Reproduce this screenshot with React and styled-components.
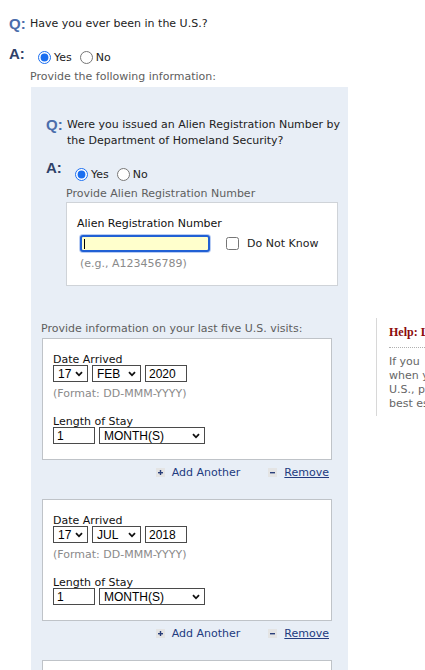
import styled, { createGlobalStyle } from 'styled-components';

const GlobalStyle = createGlobalStyle`
  html, body {
    margin: 0;
    padding: 0;
    background: #fff;
    overflow: hidden;
  }
  body {
    font-family: "DejaVu Sans", Verdana, sans-serif;
    font-size: 11px;
    color: #222;
  }
`;

const visits = [
  { day: '17', month: 'FEB', year: '2020', length: '1', unit: 'MONTH(S)' },
  { day: '17', month: 'JUL', year: '2018', length: '1', unit: 'MONTH(S)' },
];

function Chevron() {
  return (
    <svg width="8" height="6" viewBox="0 0 8 6">
      <path d="M1 1.2 L4 4.3 L7 1.2" fill="none" stroke="#111" strokeWidth="1.8" />
    </svg>
  );
}

function FakeSelect({ value, width }) {
  return (
    <SelectBox $width={width}>
      <span>{value}</span>
      <ChevronSlot>
        <Chevron />
      </ChevronSlot>
    </SelectBox>
  );
}

function SmallIcon({ minus }) {
  return (
    <svg width="9" height="9" viewBox="0 0 9 9">
      <rect x="0" y="0" width="9" height="9" fill="#e4e4e4" />
      <rect x="2" y="4" width="5" height="1.4" fill="#2a3f7a" />
      {!minus && <rect x="3.8" y="2" width="1.4" height="5" fill="#2a3f7a" />}
    </svg>
  );
}

function VisitCard({ visit }) {
  return (
    <>
      <VisitBox>
        <FieldLabel>Date Arrived</FieldLabel>
        <InlineRow>
          <FakeSelect value={visit.day} width={35} />
          <FakeSelect value={visit.month} width={49} />
          <PlainInput $width={42}>{visit.year}</PlainInput>
        </InlineRow>
        <Hint>(Format: DD-MMM-YYYY)</Hint>
        <FieldLabel $spaced>Length of Stay</FieldLabel>
        <InlineRow>
          <PlainInput $width={42}>{visit.length}</PlainInput>
          <FakeSelect value={visit.unit} width={106} />
        </InlineRow>
      </VisitBox>
      <ActionRow>
        <ActionLink>
          <SmallIcon />
          Add Another
        </ActionLink>
        <ActionLink $underline>
          <SmallIcon minus />
          Remove
        </ActionLink>
      </ActionRow>
    </>
  );
}

export default function App() {
  return (
    <Page>
      <GlobalStyle />
      <QRow>
        <QMark>Q:</QMark>
        <QText>Have you ever been in the U.S.?</QText>
      </QRow>
      <ARow>
        <AMark>A:</AMark>
        <RadioGroup>
          <RadioLabel>
            <input type="radio" name="been" defaultChecked />
            Yes
          </RadioLabel>
          <RadioLabel>
            <input type="radio" name="been" />
            No
          </RadioLabel>
        </RadioGroup>
      </ARow>
      <Note $indent={21}>Provide the following information:</Note>

      <Columns>
        <Panel>
          <QRow $inner>
            <QMark>Q:</QMark>
            <QText>
              Were you issued an Alien Registration Number by the Department of
              Homeland Security?
            </QText>
          </QRow>
          <ARow $inner>
            <AMark>A:</AMark>
            <RadioGroup $inner>
              <RadioLabel>
                <input type="radio" name="alien" defaultChecked />
                Yes
              </RadioLabel>
              <RadioLabel>
                <input type="radio" name="alien" />
                No
              </RadioLabel>
            </RadioGroup>
          </ARow>
          <Note $indent={35}>Provide Alien Registration Number</Note>
          <AlienBox>
            <FieldLabel>Alien Registration Number</FieldLabel>
            <AlienRow>
              <YellowInput />
              <CheckLabel>
                <input type="checkbox" />
                Do Not Know
              </CheckLabel>
            </AlienRow>
            <Hint $indent={3}>(e.g., A123456789)</Hint>
          </AlienBox>

          <VisitsHeading>Provide information on your last five U.S. visits:</VisitsHeading>
          {visits.map((v, i) => (
            <VisitCard key={i} visit={v} />
          ))}
          <VisitBox $empty />
        </Panel>

        <HelpColumn>
          <HelpTitle>Help: Length of Stay</HelpTitle>
          <HelpText>
            If you&nbsp;&nbsp;&nbsp;do not know the exact dates
            <br />
            when you arrived or departed the
            <br />
            U.S., please provide your
            <br />
            best estimate.
          </HelpText>
        </HelpColumn>
      </Columns>
    </Page>
  );
}

const Page = styled.div`
  padding: 17px 0 0 9px;
  width: 640px;
`;

const QRow = styled.div`
  display: flex;
  align-items: flex-start;
  margin-left: ${(p) => (p.$inner ? '15px' : '0')};
  margin-top: ${(p) => (p.$inner ? '31px' : '0')};
  padding-right: ${(p) => (p.$inner ? '6px' : '0')};
`;

const QMark = styled.span`
  width: 21px;
  flex-shrink: 0;
  font-family: "Liberation Sans", Arial, sans-serif;
  font-weight: bold;
  font-size: 15px;
  line-height: 14px;
  color: #4b6dab;
`;

const QText = styled.span`
  font-size: 11px;
  line-height: 16px;
  margin-top: -1px;
  color: #222;
`;

const ARow = styled.div`
  display: flex;
  align-items: flex-start;
  margin-left: ${(p) => (p.$inner ? '15px' : '0')};
  margin-top: ${(p) => (p.$inner ? '10px' : '13px')};
`;

const AMark = styled.span`
  width: 29px;
  flex-shrink: 0;
  margin-top: 2px;
  font-family: "Liberation Sans", Arial, sans-serif;
  font-weight: bold;
  font-size: 15px;
  line-height: 14px;
  color: #2f4168;
`;

const RadioGroup = styled.div`
  display: flex;
  gap: 8px;
  margin-top: ${(p) => (p.$inner ? '9px' : '6px')};
`;

const RadioLabel = styled.label`
  display: flex;
  align-items: center;
  font-size: 11px;
  color: #222;

  input {
    margin: 0 3px 0 0;
    width: 13px;
    height: 13px;
    accent-color: #1a6ef0;
  }
`;

const Note = styled.div`
  margin-left: ${(p) => p.$indent}px;
  margin-top: 6px;
  font-size: 11px;
  line-height: 14px;
  color: #5e5e5e;
`;

const Columns = styled.div`
  display: flex;
  align-items: flex-start;
  margin-top: 3px;
`;

const Panel = styled.div`
  width: 317px;
  margin-left: 22px;
  flex-shrink: 0;
  background: #e8eef6;
  padding-bottom: 40px;
`;

const AlienBox = styled.div`
  margin: 1px 10px 0 35px;
  padding: 15px 10px 15px 10px;
  background: #fff;
  border: 1px solid #cfd3d8;
`;

const FieldLabel = styled.div`
  font-size: 11px;
  line-height: 11px;
  color: #111;
  margin-top: ${(p) => (p.$spaced ? '16px' : '0')};
`;

const AlienRow = styled.div`
  display: flex;
  align-items: center;
  margin: 6px 0 0 3px;
`;

const YellowInput = styled.div`
  width: 126px;
  height: 13px;
  background: #ffffcc;
  border: 2px solid #2160d4;
  border-radius: 3px;
  box-shadow: 0 0 0 1px #b9cdf3;
  position: relative;

  &::before {
    content: '';
    position: absolute;
    left: 2px;
    top: 2px;
    width: 1px;
    height: 10px;
    background: #000;
  }
`;

const CheckLabel = styled.label`
  display: flex;
  align-items: center;
  margin-left: 16px;
  font-size: 11px;
  color: #222;

  input {
    margin: 0 8px 0 0;
    width: 13px;
    height: 13px;
  }
`;

const Hint = styled.div`
  margin: 5px 0 0 ${(p) => p.$indent || 0}px;
  font-size: 11px;
  line-height: 13px;
  color: #8a8a8a;
`;

const VisitsHeading = styled.div`
  margin: 36px 0 0 10px;
  font-size: 11px;
  line-height: 14px;
  color: #5e5e5e;
`;

const VisitBox = styled.div`
  width: 268px;
  min-height: ${(p) => (p.$empty ? '98px' : '0')};
  margin: 2px 0 0 11px;
  padding: 15px 10px 15px 10px;
  background: #fff;
  border: 1px solid #bfc3c8;
`;

const InlineRow = styled.div`
  display: flex;
  gap: 4px;
`;

const SelectBox = styled.div`
  width: ${(p) => p.$width}px;
  height: 17px;
  box-sizing: border-box;
  border: 1px solid #4a4a4a;
  display: flex;
  align-items: center;
  justify-content: space-between;
  padding: 0 4px 0 4px;
  font-family: "Liberation Sans", Arial, sans-serif;
  font-size: 12px;
  color: #000;
  background: #fff;
`;

const ChevronSlot = styled.span`
  display: flex;
  align-items: center;
`;

const PlainInput = styled.div`
  width: ${(p) => p.$width}px;
  height: 17px;
  box-sizing: border-box;
  border: 1px solid #4a4a4a;
  padding: 0 3px;
  display: flex;
  align-items: center;
  font-family: "Liberation Sans", Arial, sans-serif;
  font-size: 12px;
  color: #000;
  background: #fff;
`;

const ActionRow = styled.div`
  display: flex;
  justify-content: flex-end;
  align-items: center;
  gap: 28px;
  width: 290px;
  height: 24px;
  margin: 0 0 15px 11px;
  padding-right: 3px;
  box-sizing: border-box;
`;

const ActionLink = styled.span`
  display: flex;
  align-items: center;
  gap: 7px;
  font-size: 11px;
  color: #223b80;
  text-decoration: ${(p) => (p.$underline ? 'underline' : 'none')};
  cursor: pointer;

  svg {
    flex-shrink: 0;
  }
`;

const HelpColumn = styled.div`
  width: 230px;
  flex-shrink: 0;
  margin: 231px 0 0 28px;
  padding: 7px 0 5px 12px;
  border-left: 1px solid #d8d8d8;
`;

const HelpTitle = styled.div`
  font-family: "Liberation Serif", "Times New Roman", serif;
  font-weight: bold;
  font-size: 12px;
  color: #8b0b0b;
  white-space: nowrap;
  padding-bottom: 7px;
  border-bottom: 1px dotted #b0b0b0;
`;

const HelpText = styled.div`
  margin-top: 7px;
  font-size: 11px;
  line-height: 14px;
  color: #666;
  white-space: nowrap;
`;
